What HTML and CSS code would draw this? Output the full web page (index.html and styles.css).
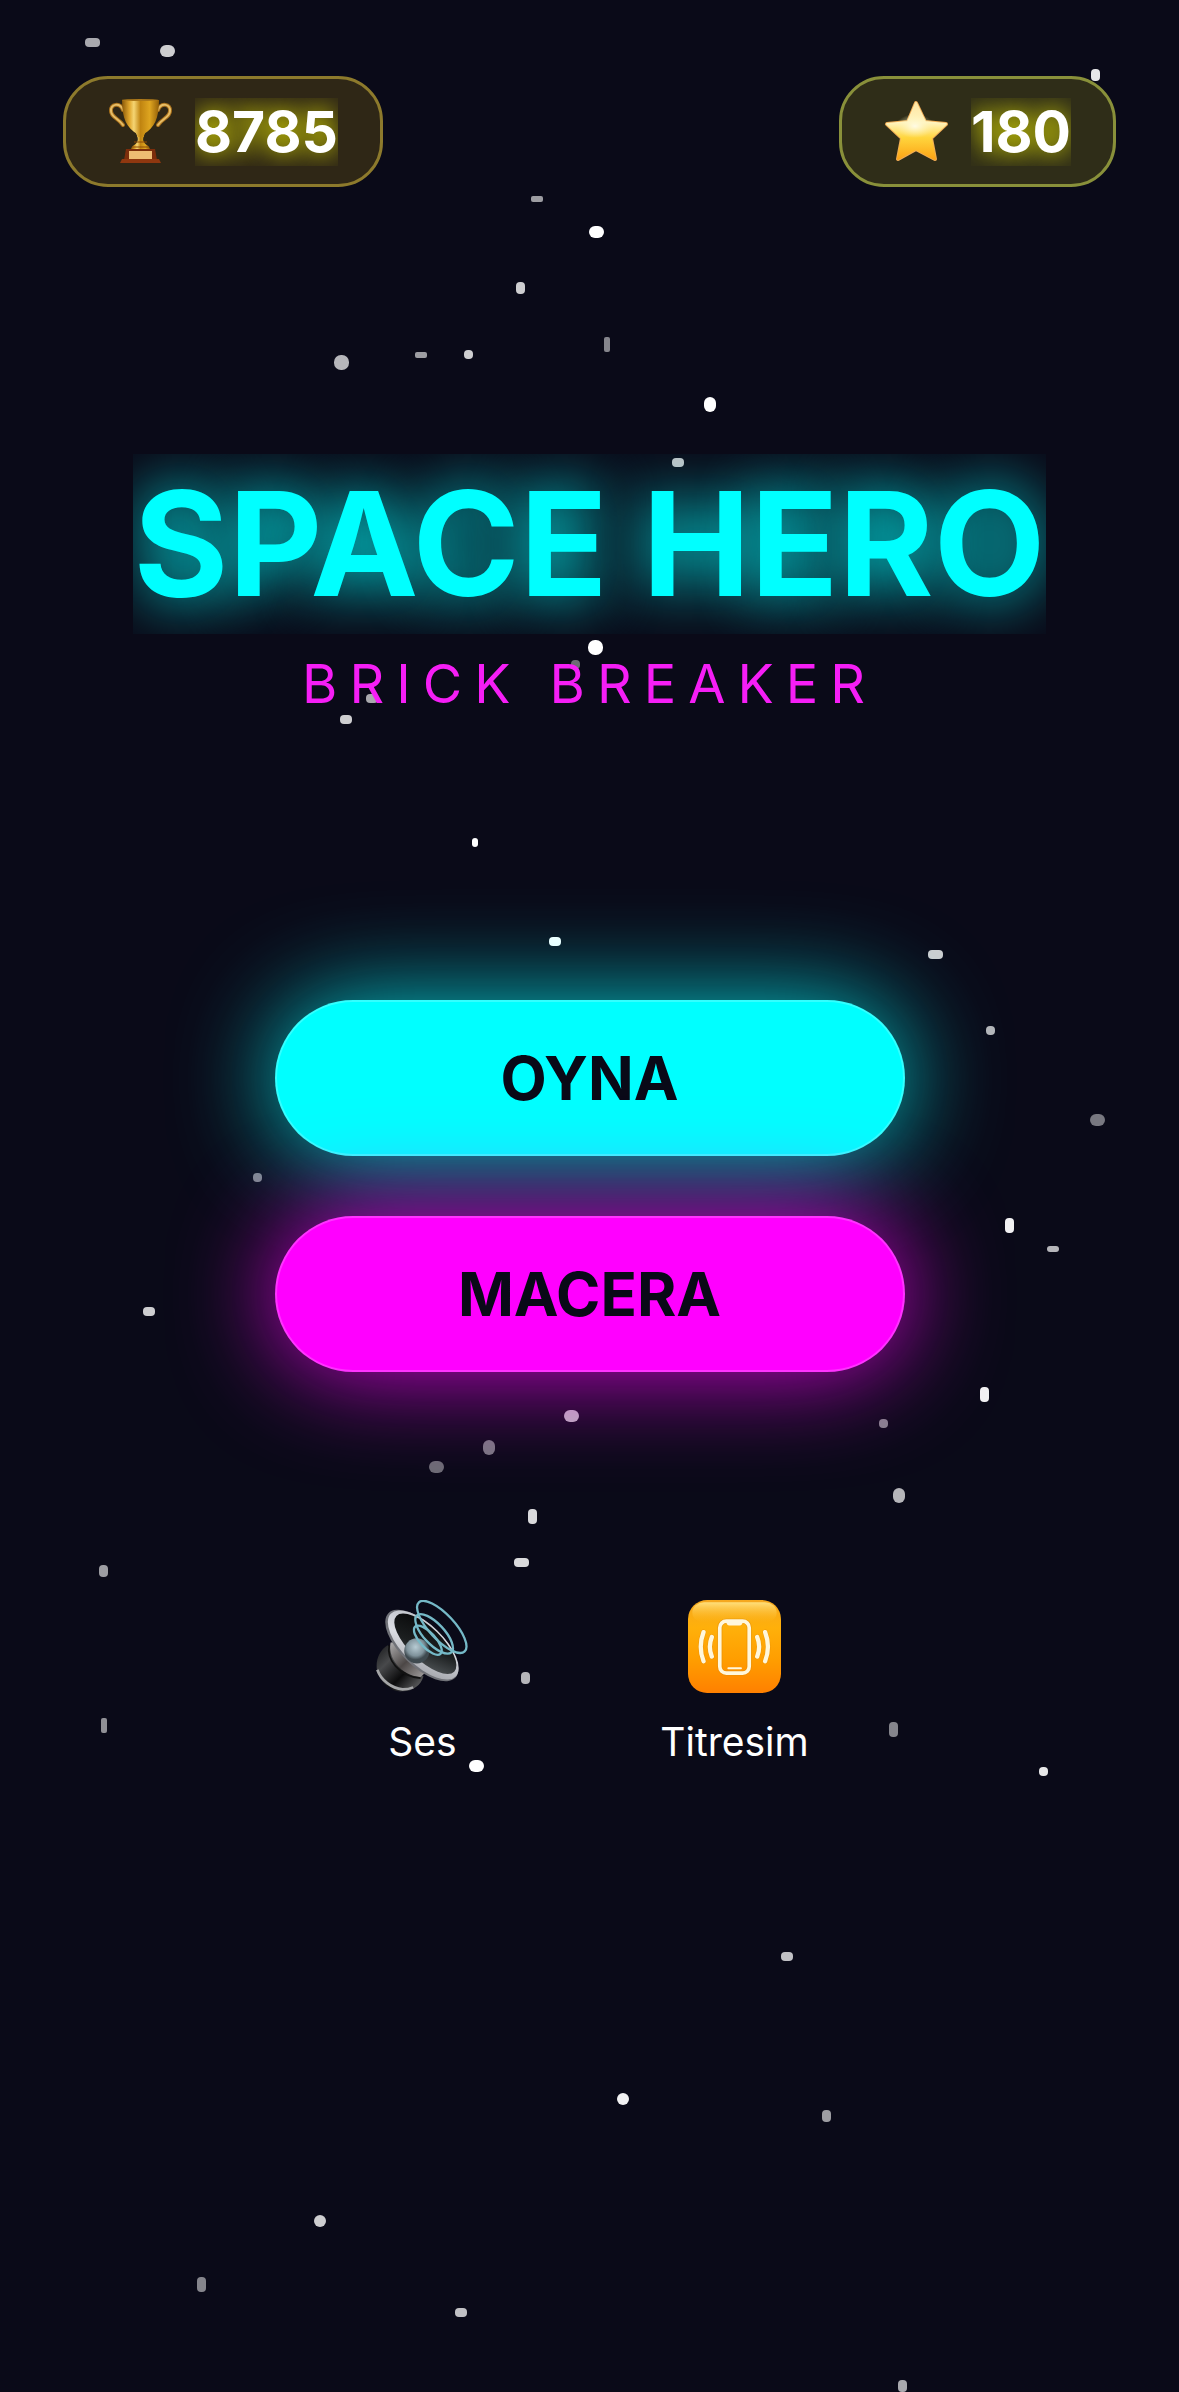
FILE: index.html
```html
<!DOCTYPE html>
<html lang="tr">
<head>
<meta charset="utf-8">
<meta name="viewport" content="width=device-width, initial-scale=1">
<title>Space Hero</title>
<link rel="stylesheet" href="styles.css">
</head>
<body>
<main class="screen">
  <svg class="starfield" viewBox="0 0 1179 2392" preserveAspectRatio="xMidYMid slice" fill="#fff" aria-hidden="true">
    <rect x="85" y="38" width="15" height="9" rx="4" opacity=".65"/>
    <rect x="160" y="45" width="15" height="12" rx="6" opacity=".8"/>
    <rect x="1091" y="69" width="9" height="12" rx="4" opacity=".9"/>
    <rect x="531" y="196" width="12" height="6" rx="2" opacity=".6"/>
    <rect x="589" y="226" width="15" height="12" rx="6"/>
    <rect x="516" y="282" width="9" height="12" rx="4" opacity=".8"/>
    <rect x="604" y="337" width="6" height="15" rx="2" opacity=".5"/>
    <rect x="334" y="355" width="15" height="15" rx="7" opacity=".7"/>
    <rect x="415" y="352" width="12" height="6" rx="2" opacity=".6"/>
    <rect x="464" y="350" width="9" height="9" rx="4" opacity=".8"/>
    <rect x="704" y="397" width="12" height="15" rx="6"/>
    <rect x="588" y="640" width="15" height="15" rx="7"/>
    <rect x="571" y="660" width="9" height="9" rx="4" opacity=".4"/>
    <rect x="366" y="694" width="12" height="9" rx="4" opacity=".65"/>
    <rect x="340" y="715" width="12" height="9" rx="4" opacity=".8"/>
    <rect x="672" y="458" width="12" height="9" rx="4" opacity=".75"/>
    <rect x="472" y="838" width="6" height="9" rx="3"/>
    <rect x="549" y="937" width="12" height="9" rx="4"/>
    <rect x="928" y="950" width="15" height="9" rx="4" opacity=".8"/>
    <rect x="986" y="1026" width="9" height="9" rx="4" opacity=".7"/>
    <rect x="1090" y="1114" width="15" height="12" rx="6" opacity=".45"/>
    <rect x="1005" y="1218" width="9" height="15" rx="4" opacity=".95"/>
    <rect x="1047" y="1246" width="12" height="6" rx="3" opacity=".7"/>
    <rect x="980" y="1387" width="9" height="15" rx="4" opacity=".95"/>
    <rect x="879" y="1419" width="9" height="9" rx="4" opacity=".5"/>
    <rect x="253" y="1173" width="9" height="9" rx="4" opacity=".5"/>
    <rect x="143" y="1307" width="12" height="9" rx="4" opacity=".8"/>
    <rect x="564" y="1410" width="15" height="12" rx="6" opacity=".7"/>
    <rect x="483" y="1440" width="12" height="15" rx="6" opacity=".45"/>
    <rect x="429" y="1461" width="15" height="12" rx="6" opacity=".4"/>
    <rect x="528" y="1509" width="9" height="15" rx="4" opacity=".85"/>
    <rect x="514" y="1558" width="15" height="9" rx="4" opacity=".85"/>
    <rect x="99" y="1565" width="9" height="12" rx="4" opacity=".6"/>
    <rect x="521" y="1672" width="9" height="12" rx="4" opacity=".7"/>
    <rect x="101" y="1718" width="6" height="15" rx="2" opacity=".55"/>
    <rect x="469" y="1760" width="15" height="12" rx="6"/>
    <rect x="893" y="1488" width="12" height="15" rx="6" opacity=".7"/>
    <rect x="889" y="1722" width="9" height="15" rx="4" opacity=".5"/>
    <rect x="1039" y="1767" width="9" height="9" rx="4" opacity=".9"/>
    <rect x="781" y="1952" width="12" height="9" rx="4" opacity=".75"/>
    <rect x="617" y="2093" width="12" height="12" rx="6" opacity=".95"/>
    <rect x="822" y="2110" width="9" height="12" rx="4" opacity=".6"/>
    <rect x="314" y="2215" width="12" height="12" rx="6" opacity=".8"/>
    <rect x="197" y="2277" width="9" height="15" rx="4" opacity=".5"/>
    <rect x="455" y="2308" width="12" height="9" rx="4" opacity=".75"/>
    <rect x="898" y="2380" width="9" height="12" rx="4" opacity=".65"/>
  </svg>

  <header class="stats">
    <div class="stat stat-trophy">
      <svg class="stat-icon" viewBox="-1 0 66 66" role="img" aria-label="Rekor">
        <defs>
          <linearGradient id="cup" x1="0" x2="1" y1="0" y2="0">
            <stop offset="0" stop-color="#8a5808"/><stop offset=".2" stop-color="#e0a62c"/>
            <stop offset=".32" stop-color="#f5d573"/><stop offset=".5" stop-color="#c08410"/>
            <stop offset=".75" stop-color="#dea520"/><stop offset="1" stop-color="#946008"/>
          </linearGradient>
        </defs>
        <g fill="none" stroke-linecap="round">
          <path d="M14 11C11 3 1 5 2 12C2 18 9 19 14 26M49 11C52 3 62 5 61 12C61 18 54 19 49 26" stroke="#a9711c" stroke-width="4"/>
          <path d="M14 11C11 3 1 5 2 12C2 18 9 19 14 26M49 11C52 3 62 5 61 12C61 18 54 19 49 26" stroke="#e6bd66" stroke-width="2"/>
        </g>
        <path d="M17 50H46L48 61H15Z" fill="#7c2d0b"/>
        <path d="M13 60H50L52 64H11Z" fill="#8f370f"/>
        <path d="M20 52H43V60H20Z" fill="#eebc73"/>
        <path d="M22 50C23 46 27 46 28 43C30 40 28 37 27 34H36C35 37 33 40 35 43C36 46 40 46 41 50Z" fill="url(#cup)"/>
        <path d="M13 1H50C50 20 45 29 35 35V38H28V35C18 29 13 20 13 1Z" fill="url(#cup)"/>
        <ellipse cx="31" cy="1" rx="18" ry="1" fill="#ad791a"/>
        <path d="M25 43H38M23 48H40" stroke="#8b4b08" stroke-width="1"/>
      </svg>
      <span class="stat-value">8785</span>
    </div>
    <div class="stat stat-star">
      <svg class="stat-icon" viewBox="0 -1 66 66" role="img" aria-label="Yıldız">
        <defs>
          <linearGradient id="star" x1="0" x2="0" y1="0" y2="1">
            <stop offset="0" stop-color="#ffe7a4"/><stop offset=".35" stop-color="#fff4c0"/>
            <stop offset=".62" stop-color="#ffd53d"/><stop offset="1" stop-color="#fda516"/>
          </linearGradient>
          <radialGradient id="shine"><stop offset="0" stop-color="#fffbe6"/><stop offset="1" stop-color="#fff4b0" stop-opacity="0"/></radialGradient>
        </defs>
        <path d="M32 3L41 22L62 24L47 38L51 59L32 49L14 59L18 38L3 24L24 22Z" fill="url(#star)" stroke="#f0ac55" stroke-width="4" stroke-linejoin="round"/>
        <path d="M32 3L41 22L62 24L47 38L51 59L32 49L14 59L18 38L3 24L24 22Z" fill="url(#star)" stroke="url(#star)" stroke-width="2" stroke-linejoin="round"/>
        <ellipse cx="31" cy="26" rx="19" ry="12" fill="url(#shine)"/>
      </svg>
      <span class="stat-value">180</span>
    </div>
  </header>

  <div class="brand">
    <h1 class="title">SPACE HERO</h1>
    <p class="subtitle">BRICK BREAKER</p>
  </div>

  <nav class="menu">
    <button class="play play-classic" type="button">OYNA</button>
    <button class="play play-adventure" type="button">MACERA</button>
  </nav>

  <div class="settings">
    <button class="setting" type="button">
      <svg class="setting-icon" viewBox="78 64 280 280" aria-hidden="true">
        <defs>
          <linearGradient id="magnet" x1="0" y1="0" x2="1" y2="1">
            <stop offset="0" stop-color="#17181a"/><stop offset=".3" stop-color="#48494b"/>
            <stop offset=".6" stop-color="#0b0b0c"/><stop offset="1" stop-color="#77787a"/>
          </linearGradient>
          <linearGradient id="neck" x1="0" y1="0" x2="1" y2="1">
            <stop offset="0" stop-color="#b0afb0"/><stop offset=".5" stop-color="#4c4746"/><stop offset="1" stop-color="#a9a6a6"/>
          </linearGradient>
          <linearGradient id="cone" x1="0" y1="0" x2="1" y2="1">
            <stop offset="0" stop-color="#050506"/><stop offset=".55" stop-color="#1c1f20"/><stop offset="1" stop-color="#5b6063"/>
          </linearGradient>
          <linearGradient id="rim" x1="0" y1="0" x2="1" y2="1">
            <stop offset="0" stop-color="#b9bcc4"/><stop offset=".45" stop-color="#dcdee4"/><stop offset="1" stop-color="#96989e"/>
          </linearGradient>
          <radialGradient id="dome" cx=".45" cy=".35"><stop offset="0" stop-color="#b7cbd3"/><stop offset=".7" stop-color="#7f929b"/><stop offset="1" stop-color="#3f4a50"/></radialGradient>
        </defs>
        <path d="M113 200C88 215 76 245 81 276C92 315 125 342 158 339C190 338 213 320 221 294Z" fill="url(#magnet)"/>
        <path d="M82 274C93 306 125 330 158 333C170 333 181 331 190 327" fill="none" stroke="#a5a6a8" stroke-width="8"/>
        <path d="M122 192C112 235 150 291 212 296L232 278L150 190Z" fill="url(#neck)"/>
        <path d="M118 200C109 241 146 295 212 299" fill="none" stroke="#111" stroke-width="5"/>
        <g transform="rotate(44 216 201)">
          <ellipse cx="216" cy="201" rx="140" ry="64" fill="#707278"/>
          <ellipse cx="218" cy="197" rx="136" ry="61" fill="url(#rim)"/>
          <ellipse cx="220" cy="190" rx="121" ry="49" fill="url(#cone)"/>
        </g>
        <circle cx="201" cy="217" r="38" fill="url(#dome)"/>
        <g fill="none" stroke="#75b9c7" stroke-width="7">
          <ellipse cx="276" cy="145" rx="101" ry="38" transform="rotate(47 276 145)"/>
          <ellipse cx="253" cy="166" rx="76" ry="31" transform="rotate(47 253 166)"/>
          <ellipse cx="234" cy="185" rx="56" ry="23" transform="rotate(47 234 185)"/>
        </g>
      </svg>
      <span class="setting-label">Ses</span>
    </button>
    <button class="setting" type="button">
      <svg class="setting-icon" viewBox="143 59 281 281" aria-hidden="true">
        <defs>
          <linearGradient id="tile" x1="0" y1="0" x2="0" y2="1">
            <stop offset="0" stop-color="#f5a820"/><stop offset=".3" stop-color="#ffb00a"/>
            <stop offset=".65" stop-color="#ff9d00"/><stop offset="1" stop-color="#ff8000"/>
          </linearGradient>
          <linearGradient id="gloss" x1="0" y1="0" x2="0" y2="1">
            <stop offset="0" stop-color="#ffdf7b"/><stop offset="1" stop-color="#ffb81b" stop-opacity="0"/>
          </linearGradient>
        </defs>
        <rect x="143" y="59" width="281" height="281" rx="58" fill="url(#tile)"/>
        <rect x="156" y="66" width="255" height="62" rx="36" fill="url(#gloss)"/>
        <g fill="none" stroke="#e28b08" stroke-width="16" stroke-linecap="round" opacity=".5">
          <rect x="239" y="123" width="89" height="157" rx="20"/>
          <path d="M190 156Q173 200 190 244M215 171Q203 200 215 230M352 171Q364 200 352 230M376 156Q393 200 376 244"/>
        </g>
        <g fill="none" stroke="#fff7dc" stroke-width="11" stroke-linecap="round">
          <rect x="239" y="123" width="89" height="157" rx="20"/>
          <path d="M190 156Q173 200 190 244M215 171Q203 200 215 230M352 171Q364 200 352 230M376 156Q393 200 376 244" stroke-width="13"/>
        </g>
        <path d="M258 124H309Q307 136 299 136H268Q260 136 258 124Z" fill="#fff7dc"/>
        <path d="M265 265H303" stroke="#fff7dc" stroke-width="6" stroke-linecap="round"/>
      </svg>
      <span class="setting-label">Titresim</span>
    </button>
  </div>
</main>
</body>
</html>
```
FILE: styles.css
```css
* {
  box-sizing: border-box;
}

body {
  margin: 0;
  background: #0a0a18;
  color: #fff;
  font-family: Inter, "Liberation Sans", sans-serif;
}

button {
  margin: 0;
  font: inherit;
  cursor: pointer;
}

.screen {
  position: relative;
  isolation: isolate;
  display: flex;
  flex-direction: column;
  align-items: center;
  min-height: 100vh;
  padding: 76px 63px;
  overflow: hidden;
}

/* Decorative backdrop lying under the whole screen */
.starfield {
  position: absolute;
  inset: 0;
  z-index: -1;
  width: 100%;
  height: 100%;
}

.stats {
  display: flex;
  justify-content: space-between;
  align-self: stretch;
}

.stat {
  display: flex;
  align-items: center;
  gap: 21px;
  height: 111px;
  padding: 0 42px;
  border: 3px solid;
  border-radius: 45px;
}

.stat-trophy {
  background: #2f2716;
  border-color: #8d7a2c;
}

.stat-star {
  background: #2f2d18;
  border-color: #89903a;
}

.stat-icon {
  width: 66px;
  height: 66px;
}

.stat-value {
  overflow: hidden;
  font-size: 57px;
  font-weight: 700;
  line-height: 68px;
  text-shadow: 0 0 24px #ff0;
}

.brand {
  display: flex;
  flex-direction: column;
  align-items: center;
  margin-top: 267px;
}

.title {
  margin: 0;
  overflow: hidden;
  color: #0ff;
  font-size: 145px;
  font-weight: 700;
  line-height: 180px;
  white-space: nowrap;
  text-shadow: 0 0 60px #0ff;
}

.subtitle {
  margin: 16px 0 0;
  color: #f51ef5;
  font-size: 54px;
  line-height: 68px;
  letter-spacing: 12px;
  white-space: nowrap;
}

.menu {
  display: flex;
  flex-direction: column;
  gap: 60px;
  width: 100%;
  max-width: 630px;
  margin-top: 282px;
}

.play {
  height: 156px;
  border: 2px solid rgba(255, 255, 255, 0.2);
  border-radius: 78px;
  color: #090917;
  font-size: 60px;
  font-weight: 700;
}

.play-classic {
  background: #0ff border-box;
  box-shadow: 0 0 100px rgba(0, 255, 255, 0.8);
}

.play-adventure {
  background: #f0f border-box;
  box-shadow: 0 0 100px rgba(255, 0, 255, 0.8);
}

.settings {
  display: flex;
  gap: 186px;
  margin-top: 228px;
}

.setting {
  display: flex;
  flex-direction: column;
  align-items: center;
  gap: 24px;
  min-width: 104px;
  padding: 0;
  border: 0;
  background: none;
  color: #fff;
}

.setting-icon {
  width: 93px;
  height: 93px;
}

.setting-label {
  font-size: 39px;
  line-height: 50px;
}
```
